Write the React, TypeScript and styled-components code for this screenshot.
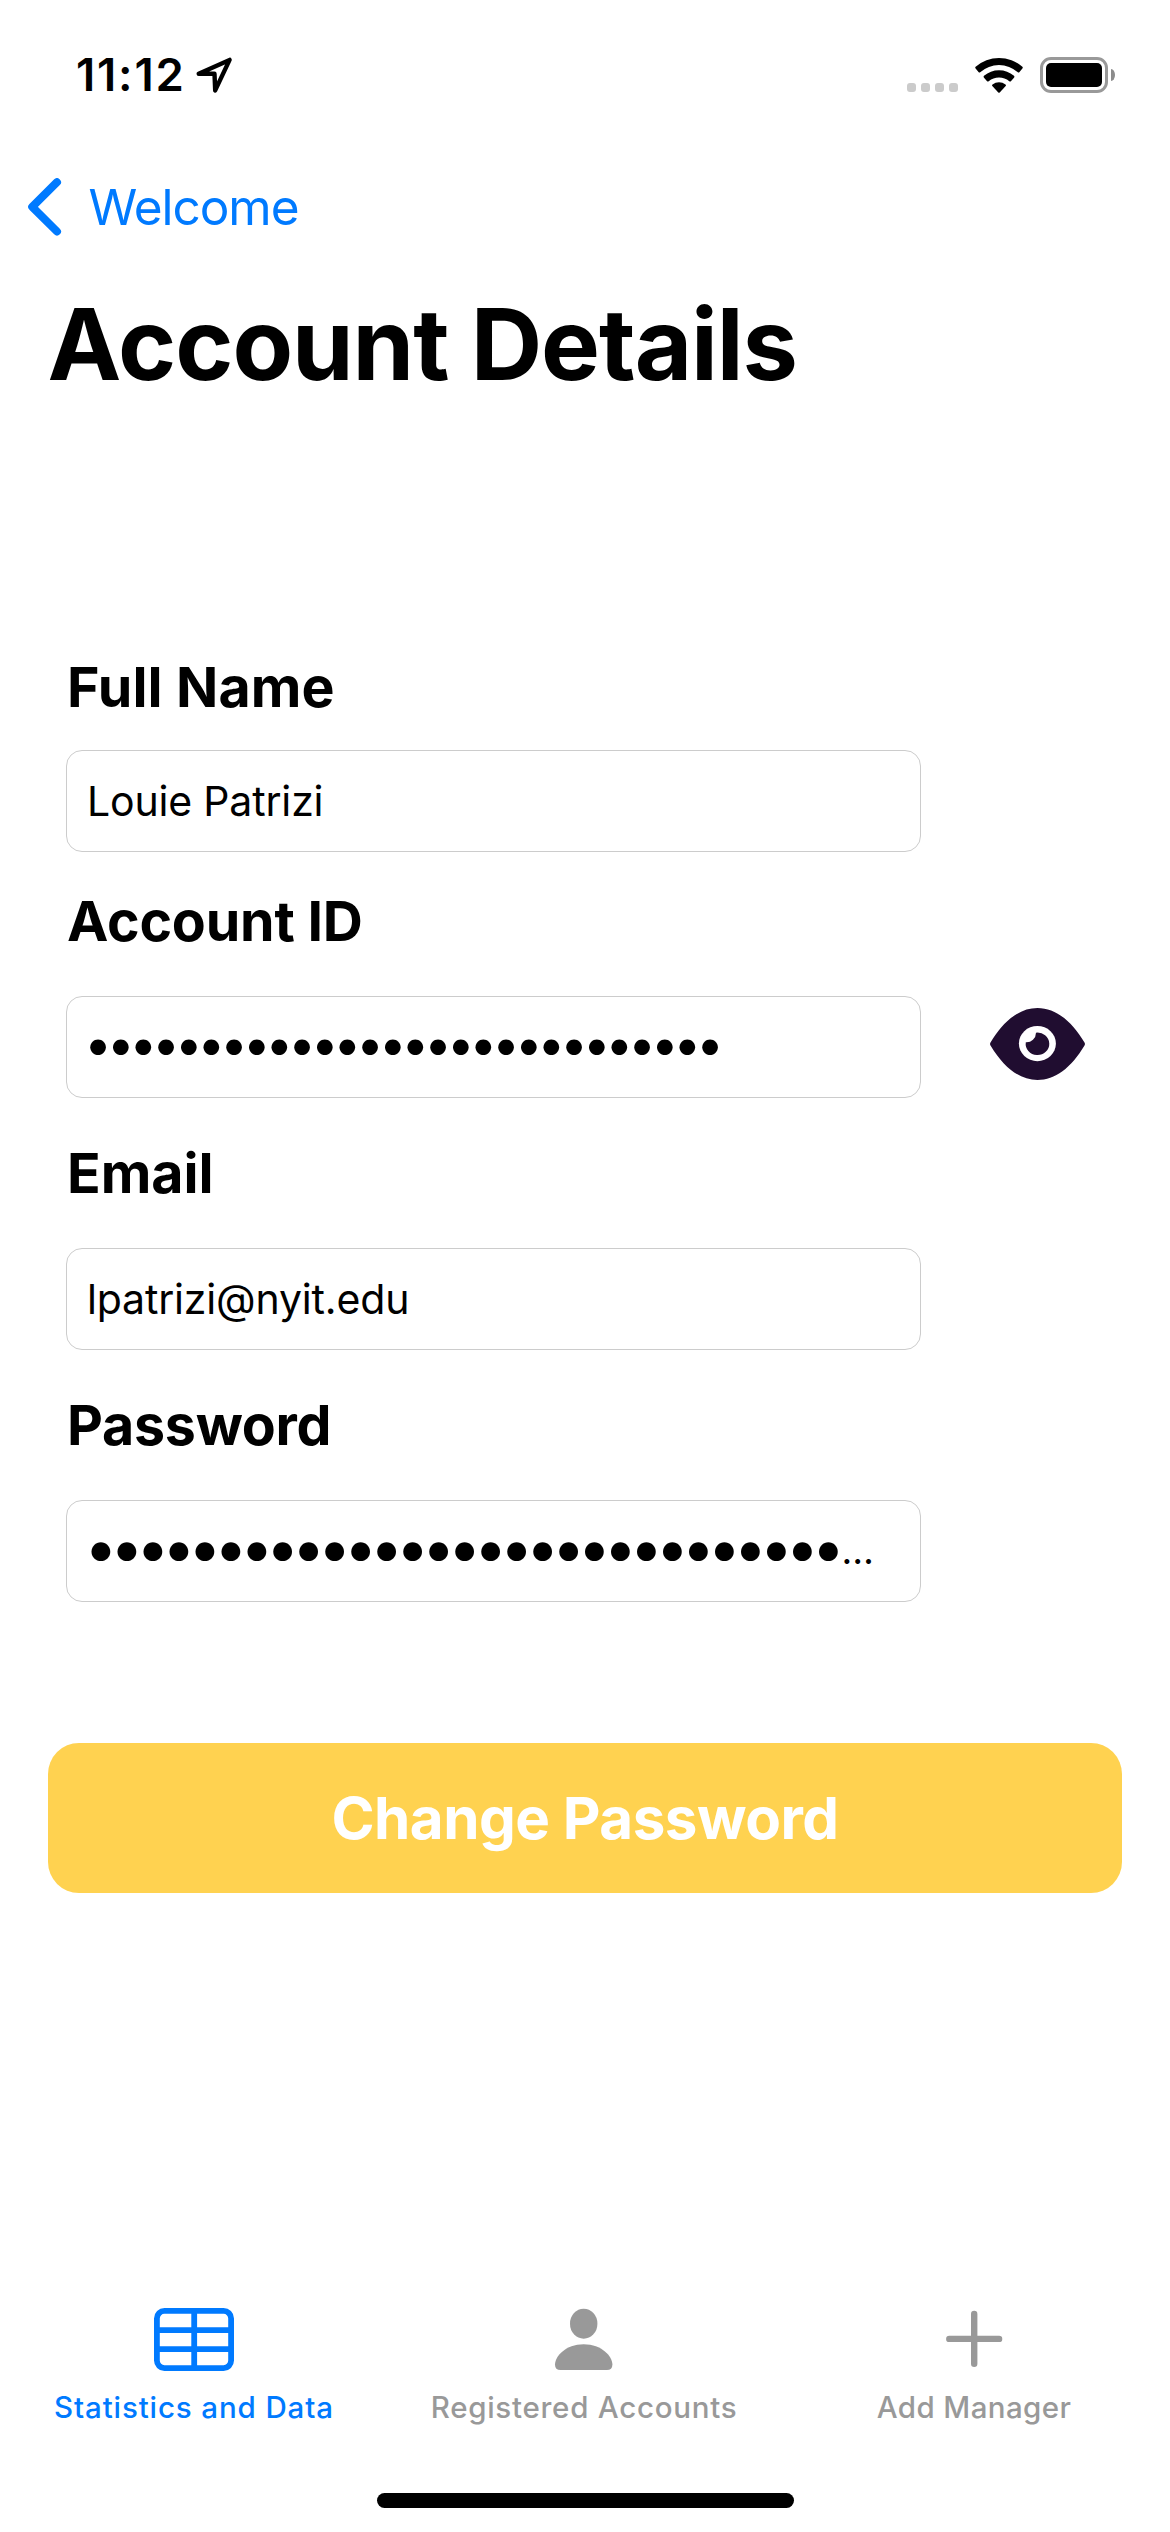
import React from "react";
import styled, { createGlobalStyle } from "styled-components";

const BLUE = "#007aff";
const GRAY = "#999999";

const GlobalStyle = createGlobalStyle`
  * { box-sizing: border-box; }
  body {
    margin: 0;
    background: #fff;
    color: #000;
    font-family: Inter, "Liberation Sans", sans-serif;
  }
  svg { display: block; flex: none; }
`;

const Screen = styled.div`
  display: flex;
  flex-direction: column;
  width: 1170px;
  height: 2532px;
  overflow: hidden;
  background: #fff;
`;

const StatusBar = styled.header`
  display: flex;
  align-items: center;
  justify-content: space-between;
  height: 141px;
  padding: 8px 54px 0 76px;
`;

const StatusLeft = styled.div`
  display: flex;
  align-items: center;
  gap: 9px;
`;

const Time = styled.span`
  font-size: 45.5px;
  font-weight: 600;
  line-height: 56px;
  letter-spacing: 1.8px;
`;

const StatusRight = styled.div`
  display: flex;
  align-items: center;
`;

const Signal = styled.div`
  display: flex;
  gap: 5px;
  margin: 25px 17px 0 0;
`;

const SignalDot = styled.i`
  width: 9px;
  height: 9px;
  border-radius: 3px;
  background: #cbcbcb;
`;

const Battery = styled.div`
  width: 68px;
  height: 36px;
  margin-left: 17px;
  padding: 3px;
  border: 3px solid ${GRAY};
  border-radius: 11px;
`;

const BatteryLevel = styled.div`
  height: 100%;
  border-radius: 5px;
  background: #000;
`;

const BatteryCap = styled.div`
  width: 4px;
  height: 12px;
  margin: 0 1px 0 3px;
  border-radius: 0 4px 4px 0 / 0 6px 6px 0;
  background: #8c8c8c;
`;

const NavBar = styled.nav`
  display: flex;
  align-items: center;
  height: 132px;
  padding-left: 27px;
`;

const BackButton = styled.button`
  display: flex;
  align-items: center;
  gap: 25.5px;
  padding: 0;
  border: 0;
  background: none;
  color: ${BLUE};
  font: inherit;
  font-size: 49.5px;
  line-height: 60px;
  letter-spacing: -1.05px;
`;

const Title = styled.h1`
  margin: 11px 0 0 47.5px;
  font-size: 99px;
  font-weight: 700;
  line-height: 121px;
  letter-spacing: -1.08px;
`;

const Form = styled.form`
  display: flex;
  flex-direction: column;
  gap: 45px;
  margin: 252px 0 0 66px;
`;

const Field = styled.div<{ $gap: number; $pull?: number }>`
  display: flex;
  flex-direction: column;
  gap: ${(p) => p.$gap}px;
  margin-top: ${(p) => -(p.$pull ?? 0)}px;
`;

const Label = styled.label<{ $tracking: number }>`
  padding-left: 1px;
  font-size: 55.5px;
  font-weight: 700;
  line-height: 60px;
  letter-spacing: ${(p) => p.$tracking}px;
`;

const InputRow = styled.div`
  display: flex;
  align-items: center;
  gap: 69px;
`;

const ValueBox = styled.div`
  display: flex;
  align-items: center;
  width: 855px;
  height: 102px;
  padding-left: 20px;
  border: 1px solid #cccccc;
  border-radius: 16px;
  white-space: nowrap;
`;

const Value = styled.span`
  font-size: 41px;
  line-height: 50px;
  letter-spacing: -0.17px;
`;

const Mask = styled.span<{ $size: number; $tracking: number; $lift: number }>`
  margin-left: -3px;
  padding-bottom: ${(p) => p.$lift}px;
  font-size: ${(p) => p.$size}px;
  line-height: 60px;
  letter-spacing: ${(p) => p.$tracking}px;
`;

const Ellipsis = styled.span`
  margin-left: 4px;
  font-size: 37.5px;
  line-height: 60px;
`;

const RevealButton = styled.button`
  padding: 0;
  margin-bottom: 6px;
  border: 0;
  background: none;
`;

const PrimaryButton = styled.button`
  height: 150px;
  margin: 141px 48px 0;
  padding: 0 0 1px;
  border: 0;
  border-radius: 31px;
  background: #ffd250;
  color: #fff;
  font-family: inherit;
  font-size: 58.3px;
  font-weight: 700;
  letter-spacing: -0.5px;
`;

const Spacer = styled.div`
  flex: 1;
`;

const TabBar = styled.nav`
  display: grid;
  grid-template-columns: repeat(3, 1fr);
  height: 210px;
  padding-top: 25px;
`;

const Tab = styled.a<{ $active?: boolean; $tracking: number }>`
  display: flex;
  flex-direction: column;
  align-items: center;
  gap: 17px;
  padding-right: 2px;
  color: ${(p) => (p.$active ? BLUE : GRAY)};
  font-size: 29.5px;
  font-weight: 500;
  line-height: 36px;
  letter-spacing: ${(p) => p.$tracking}px;
  white-space: nowrap;
`;

const HomeIndicator = styled.div`
  align-self: center;
  width: 417px;
  height: 15px;
  margin-bottom: 24px;
  border-radius: 8px;
  background: #000;
`;

const LocationIcon = () => (
  <svg width="38" height="38" viewBox="195 56 38 38" fill="none" stroke="#000" strokeWidth="4.4" strokeLinejoin="round">
    <path d="M198.7 73.8 L229.6 59.9 L215.2 90.4 L214.5 73.8 Z" />
  </svg>
);

const WifiIcon = () => (
  <svg width="48" height="36" viewBox="0 0 48 36" fill="#000">
    <path d="M0.6 11.5 Q-0.2 10.6 0.6 9.7 A35.5 35.5 0 0 1 47.4 9.7 Q48.2 10.6 47.4 11.5 L44.3 15.2 Q43.6 15.9 42.8 15.2 A28.3 28.3 0 0 0 5.2 15.2 Q4.4 15.9 3.7 15.2 Z" />
    <path d="M8.8 20.4 Q8.2 19.6 9 18.8 A23 23 0 0 1 39 18.8 Q39.8 19.6 39.2 20.4 L35.9 24.2 Q35.2 24.9 34.3 24.2 A16.2 16.2 0 0 0 13.7 24.2 Q12.8 24.9 12.1 24.2 Z" />
    <path d="M17.3 29 Q16.6 28.2 17.5 27.5 A10.6 10.6 0 0 1 30.5 27.5 Q31.4 28.2 30.7 29 L24.7 35.5 Q24 36.2 23.3 35.5 Z" />
  </svg>
);

const ChevronIcon = () => (
  <svg width="36" height="58" viewBox="27 178 36 58" fill="none" stroke="currentColor" strokeWidth="8" strokeLinecap="round" strokeLinejoin="round">
    <path d="M57 182.2 L32.2 206.8 L57 231.5" />
  </svg>
);

const EyeIcon = () => (
  <svg width="95" height="72" viewBox="0 0 95 72" fill="#200d30">
    <path d="M0.5 37.5 Q-0.4 36 0.5 34.5 C14 12 30 0 47.5 0 S81 12 94.5 34.5 Q95.4 36 94.5 37.5 C81 60 65 72 47.5 72 S14 60 0.5 37.5 Z" />
    <ellipse cx="47.4" cy="35.6" rx="18.5" ry="17.6" fill="#fff" />
    <path d="M46 24.7 A11.8 11.2 0 1 1 35.8 34.2 A9.5 9.5 0 0 0 46 24.7 Z" />
  </svg>
);

const TableIcon = () => (
  <svg width="80" height="64" viewBox="0 0 80 64" fill="none" stroke="currentColor" strokeWidth="5.8">
    <rect x="2.9" y="2.9" width="74.2" height="57.2" rx="7.5" />
    <path d="M40.2 3V60M3 22.1H77M3 41.1H77" />
  </svg>
);

const PersonIcon = () => (
  <svg width="80" height="64" viewBox="0 0 80 64" fill="currentColor">
    <ellipse cx="39.7" cy="15.7" rx="13.7" ry="15" />
    <path d="M11 56.5 C11 48.5 21.5 36.2 39.7 36.2 S68.4 48.5 68.4 56.5 Q68.4 62 62.8 62 H16.6 Q11 62 11 56.5 Z" />
  </svg>
);

const PlusIcon = () => (
  <svg width="80" height="64" viewBox="0 0 80 64" fill="none" stroke="currentColor" strokeWidth="6.4" strokeLinecap="round">
    <path d="M40.2 6V55.8M15.3 30.9H65.1" />
  </svg>
);

export default function App() {
  return (
    <Screen>
      <GlobalStyle />
      <StatusBar>
        <StatusLeft>
          <Time>11:12</Time>
          <LocationIcon />
        </StatusLeft>
        <StatusRight>
          <Signal>
            {[0, 1, 2, 3].map((n) => (
              <SignalDot key={n} />
            ))}
          </Signal>
          <WifiIcon />
          <Battery>
            <BatteryLevel />
          </Battery>
          <BatteryCap />
        </StatusRight>
      </StatusBar>

      <NavBar>
        <BackButton type="button">
          <ChevronIcon />
          Welcome
        </BackButton>
      </NavBar>
      <Title>Account Details</Title>

      <Form>
        <Field $gap={33}>
          <Label $tracking={0.1}>Full Name</Label>
          <ValueBox>
            <Value>Louie Patrizi</Value>
          </ValueBox>
        </Field>
        <Field $gap={45} $pull={6}>
          <Label $tracking={-0.2}>Account ID</Label>
          <InputRow>
            <ValueBox>
              <Mask $size={50} $tracking={-5.46} $lift={7}>
                {"•".repeat(28)}
              </Mask>
            </ValueBox>
            <RevealButton type="button" aria-label="Show account ID">
              <EyeIcon />
            </RevealButton>
          </InputRow>
        </Field>
        <Field $gap={45}>
          <Label $tracking={0}>Email</Label>
          <ValueBox>
            <Value>lpatrizi@nyit.edu</Value>
          </ValueBox>
        </Field>
        <Field $gap={45}>
          <Label $tracking={-0.25}>Password</Label>
          <ValueBox>
            <Mask $size={60} $tracking={-7.77} $lift={9}>
              {"•".repeat(29)}
            </Mask>
            <Ellipsis>…</Ellipsis>
          </ValueBox>
        </Field>
      </Form>

      <PrimaryButton type="button">Change Password</PrimaryButton>

      <Spacer />

      <TabBar>
        <Tab $active $tracking={0.88}>
          <TableIcon />
          Statistics and Data
        </Tab>
        <Tab $tracking={0.73}>
          <PersonIcon />
          Registered Accounts
        </Tab>
        <Tab $tracking={0.39}>
          <PlusIcon />
          Add Manager
        </Tab>
      </TabBar>
      <HomeIndicator />
    </Screen>
  );
}
